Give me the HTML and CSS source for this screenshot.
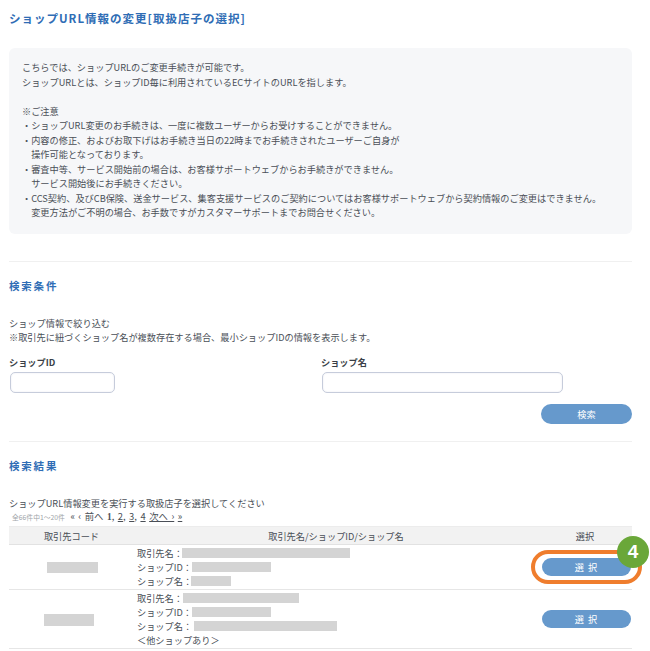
FILE: index.html
```html
<!DOCTYPE html>
<html lang="ja">
<head>
<meta charset="utf-8">
<title>ショップURL情報の変更</title>
<link rel="stylesheet" href="styles.css">
</head>
<body>
<main class="page">
  <h1 class="page-title">ショップURL情報の変更[取扱店子の選択]</h1>
  <section class="notice">
    <p>こちらでは、ショップURLのご変更手続きが可能です。</p>
    <p>ショップURLとは、ショップID毎に利用されているECサイトのURLを指します。</p>
    <p class="blank">&nbsp;</p>
    <p>※ご注意</p>
    <p class="item">・ショップURL変更のお手続きは、一度に複数ユーザーからお受けすることができません。</p>
    <p class="item">・内容の修正、およびお取下げはお手続き当日の22時までお手続きされたユーザーご自身が</p>
    <p class="cont">操作可能となっております。</p>
    <p class="item">・審査中等、サービス開始前の場合は、お客様サポートウェブからお手続きができません。</p>
    <p class="cont">サービス開始後にお手続きください。</p>
    <p class="item">・CCS契約、及びCB保険、送金サービス、集客支援サービスのご契約についてはお客様サポートウェブから契約情報のご変更はできません。</p>
    <p class="cont">変更方法がご不明の場合、お手数ですがカスタマーサポートまでお問合せください。</p>
  </section>
  <hr class="rule rule-first">
  <h2 class="section-title">検索条件</h2>
  <p class="desc">ショップ情報で絞り込む<br>※取引先に紐づくショップ名が複数存在する場合、最小ショップIDの情報を表示します。</p>
  <form class="search-form">
    <div class="field field-id">
      <label class="field-label" for="shop-id">ショップID</label>
      <input class="input input-id" id="shop-id" type="text">
    </div>
    <div class="field">
      <label class="field-label" for="shop-name">ショップ名</label>
      <input class="input input-name" id="shop-name" type="text">
    </div>
  </form>
  <div class="search-actions"><button class="btn btn-search" type="button">検索</button></div>
  <hr class="rule rule-second">
  <h2 class="section-title">検索結果</h2>
  <p class="result-desc">ショップURL情報変更を実行する取扱店子を選択してください</p>
  <div class="pager"><span class="count">全66件中1～20件</span> <span class="nav">« ‹</span> 前へ <b>1</b>, <a href="#">2</a>, <a href="#">3</a>, <a href="#">4</a> <a href="#">次へ ›</a> <a href="#">»</a></div>
  <table class="results">
    <thead>
      <tr><th class="col-code">取引先コード</th><th class="col-name">取引先名/ショップID/ショップ名</th><th class="col-select">選択</th></tr>
    </thead>
    <tbody>
      <tr class="row-one">
        <td class="code-cell"><span class="mask mask-code-a"></span></td>
        <td class="info-cell">
          <div class="info-line">取引先名：<span class="mask mask-w168"></span></div>
          <div class="info-line">ショップID：<span class="mask mask-w79"></span></div>
          <div class="info-line">ショップ名：<span class="mask mask-w41"></span></div>
        </td>
        <td class="select-cell">
          <span class="select-wrap">
            <button class="btn btn-select" type="button">選 択</button>
            <span class="highlight"></span>
            <span class="badge">4</span>
          </span>
        </td>
      </tr>
      <tr class="row-two">
        <td class="code-cell"><span class="mask mask-code-b"></span></td>
        <td class="info-cell">
          <div class="info-line">取引先名：<span class="mask mask-w116"></span></div>
          <div class="info-line">ショップID：<span class="mask mask-w79"></span></div>
          <div class="info-line">ショップ名：<span class="mask mask-w144"></span></div>
          <div class="info-line">＜他ショップあり＞</div>
        </td>
        <td class="select-cell select-cell-top"><button class="btn btn-select" type="button">選 択</button></td>
      </tr>
    </tbody>
  </table>
</main>
</body>
</html>
```

FILE: styles.css
```css
* { box-sizing: border-box; }
html, body { margin: 0; padding: 0; background: #fff; }
body {
  font-family: "Noto Sans CJK JP", "Noto Sans", sans-serif;
  font-size: 9.2px;
  color: #4a4f57;
  overflow: hidden;
  height: 651px;
}
.page { width: 632px; margin-left: 9px; }
p { margin: 0; }

.page-title {
  margin: 0;
  padding-top: 10px;
  height: 48px;
  font-size: 11.5px;
  line-height: 16px;
  font-weight: 700;
  letter-spacing: 1px;
  color: #2f6db5;
}
.notice {
  width: 623px;
  height: 186px;
  background: #f6f7f9;
  border-radius: 6px;
  padding: 12px 13px 0;
  line-height: 14.5px;
}
.notice .cont { padding-left: 9.2px; }

.rule { border: 0; border-top: 1px solid #f0f0f0; margin: 0; width: 623px; }
.rule-first { margin-top: 27px; }
.rule-second { margin-top: 17px; }

.section-title {
  margin: 0;
  font-size: 10.5px;
  line-height: 14px;
  font-weight: 700;
  letter-spacing: 1.8px;
  color: #2f6db5;
}
.rule-first + .section-title { padding-top: 17px; height: 54px; }
.rule-second + .section-title { padding-top: 17px; height: 54px; }

.desc { line-height: 14px; }

.search-form { display: flex; margin-top: 12px; }
.field { display: flex; flex-direction: column; }
.field-id { width: 312px; }
.field-label { font-weight: 700; font-size: 9.2px; line-height: 13px; color: #3a3f47; height: 16px; }
.input {
  height: 21px;
  margin-left: 1px;
  border: 1px solid #c6ccdb;
  border-radius: 5px;
  background: #fff;
  box-shadow: inset 0 0 2px #e6e8f0;
}
.input-id { width: 105px; }
.input-name { width: 241px; }

.search-actions { display: flex; justify-content: flex-end; width: 623px; margin-top: 11px; }
.btn {
  display: block;
  border: 0;
  padding: 0;
  background: #6699cc;
  color: #fff;
  font-family: inherit;
  font-size: 9.2px;
  border-radius: 10px;
  text-align: center;
}
.btn-search { width: 91px; height: 20px; }

.result-desc { line-height: 14px; }
.pager { line-height: 14px; height: 16px; font-size: 9.4px; padding-left: 3px; white-space: nowrap; word-spacing: 1.4px; margin-top: -1px; margin-bottom: 1px; }
.pager a { color: #4a4f57; }
.pager b { font-family: "Liberation Serif", serif; }
.count { font-size: 6.8px; color: #a0a4a8; margin-right: 2px; word-spacing: 0; }

.results { width: 623px; border-collapse: collapse; table-layout: fixed; }
.results th {
  height: 18px;
  padding: 0;
  background: #f2f2f2;
  border-top: 1px solid #ececec;
  border-bottom: 1px solid #e2e2e2;
  font-weight: 400;
  text-align: center;
}
.col-code { width: 125px; }
.col-select { width: 94px; }
.results td { padding: 0; border-bottom: 1px solid #e6e6e6; vertical-align: top; }
.row-one td { height: 45px; }
.row-two td { height: 59px; }
.results .info-cell { padding: 1px 0 0 3px; }
.info-line { height: 14px; line-height: 14px; white-space: nowrap; display: flex; align-items: center; }

.mask { display: inline-block; background: #d4d4d4; height: 10px; }
.results .code-cell { vertical-align: middle; }
.mask-code-a { display: block; width: 51px; height: 11px; margin-left: 38px; }
.mask-code-b { display: block; width: 50px; height: 12px; margin: 2px 0 0 35px; }
.mask-w168 { width: 168px; margin-left: -1px; }
.mask-w79 { width: 79px; }
.mask-w41 { width: 40px; margin-left: -1px; }
.mask-w116 { width: 116px; }
.mask-w144 { width: 143px; margin-left: 2px; }

.select-wrap { position: relative; display: block; width: 89px; margin: 13px 0 0 4px; }
.select-cell-top .btn-select { margin: 20px 0 0 4px; }
.btn-select { width: 89px; height: 18px; letter-spacing: 1px; }
.highlight {
  position: absolute;
  left: -11px;
  top: -8px;
  width: 111px;
  height: 34px;
  border: 4px solid #ef7d2d;
  border-radius: 17px;
}
.badge {
  position: absolute;
  left: 75px;
  top: -22px;
  width: 32px;
  height: 32px;
  border-radius: 50%;
  background: #6aa739;
  color: #fff;
  font-family: "Liberation Sans", sans-serif;
  font-size: 19px;
  font-weight: 700;
  line-height: 32px;
  text-align: center;
}
```
